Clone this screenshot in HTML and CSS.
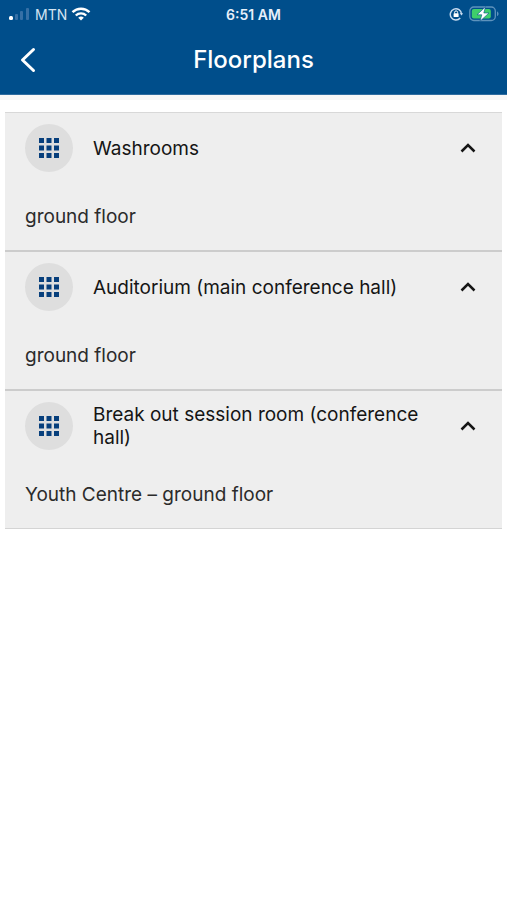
FILE: index.html
```html
<!DOCTYPE html>
<html lang="en">
<head>
<meta charset="utf-8">
<meta name="viewport" content="width=device-width, initial-scale=1">
<title>Floorplans</title>
<link rel="stylesheet" href="styles.css">
</head>
<body>
<svg class="sprite" aria-hidden="true">
  <symbol id="grid" viewBox="0 0 20 20">
    <path d="M0 0h5v5H0zM7.500 0h5v5h-5zM15 0h5v5h-5zM0 7.500h5v5H0zM7.500 7.500h5v5h-5zM15 7.500h5v5h-5zM0 15h5v5H0zM7.500 15h5v5h-5zM15 15h5v5h-5z"/>
  </symbol>
  <symbol id="up" viewBox="0 0 16 10">
    <path d="M1.500 8.500 8 2l6.500 6.500" fill="none" stroke="currentColor" stroke-width="2.500"/>
  </symbol>
</svg>
<header class="top">
  <div class="status">
    <div class="status-side">
      <svg class="signal" width="23" height="14" viewBox="0 0 23 14" aria-hidden="true">
        <rect x="1" y="9" width="4" height="4" rx="1.500" fill="#fff"/>
        <g fill="#5a88b8" opacity=".6"><rect x="7" y="7" width="3" height="6" rx="1"/><rect x="12" y="4" width="3" height="9" rx="1"/><rect x="18" y="1" width="3" height="12" rx="1"/></g>
      </svg>
      <span class="carrier">MTN</span>
      <svg width="20" height="14" viewBox="0 0 20 14" fill="none" stroke="#fff" stroke-width="2.400" aria-hidden="true">
        <path d="M1.500 5.200a12.200 12.200 0 0 1 17 0M4.800 8.500a7.500 7.500 0 0 1 10.400 0"/>
        <path d="M10 13.500 7.200 10.800a4 4 0 0 1 5.600 0z" fill="#fff" stroke="none"/>
      </svg>
    </div>
    <span class="time">6:51 AM</span>
    <div class="status-side status-end">
      <svg width="14" height="14" viewBox="0 0 14 14" aria-hidden="true">
        <path d="M11.200 11A5.600 5.600 0 1 1 12.500 7" fill="none" stroke="#c9dcf0" stroke-width="1.500"/>
        <path d="m10.700 6.300 1.900 2.200 1.400-2.200z" fill="#c9dcf0"/>
        <rect x="4.600" y="6.300" width="5" height="3.700" rx=".6" fill="#fff"/>
        <path d="M5.600 6.500V5.400a1.500 1.500 0 0 1 3 0v1.100" fill="none" stroke="#fff"/>
      </svg>
      <svg width="30" height="16" viewBox="0 0 30 16" aria-hidden="true">
        <rect x=".8" y="1" width="25.500" height="13.500" rx="4" fill="none" stroke="#5e93bd" stroke-width="1.300"/>
        <path d="M28 5.500c2 .6 2 4 0 4.600z" fill="#5e93bd"/>
        <rect x="2.800" y="3" width="19" height="9.500" rx="2" fill="#3fcf6b"/>
        <path d="M16.500 .8 8 8.800h4.800L11 15.200 20 7h-5.200z" fill="#fff" stroke="#00508c" stroke-width=".6"/>
      </svg>
    </div>
  </div>
  <div class="bar">
    <button class="back" type="button" aria-label="Back">
      <svg width="16" height="26" viewBox="0 0 16 26" fill="none" stroke="currentColor" stroke-width="3" stroke-linecap="round" stroke-linejoin="round" aria-hidden="true"><path d="M13.500 2.500 2.500 13l11 10.500"/></svg>
    </button>
    <h1 class="title">Floorplans</h1>
  </div>
</header>
<main class="list">
  <section class="item">
    <button class="head" type="button" aria-expanded="true">
      <span class="badge"><svg width="20" height="20" aria-hidden="true"><use href="#grid"/></svg></span>
      <span class="name">Washrooms</span>
      <svg width="16" height="10" aria-hidden="true"><use href="#up"/></svg>
    </button>
    <p class="place">ground floor</p>
  </section>
  <section class="item">
    <button class="head" type="button" aria-expanded="true">
      <span class="badge"><svg width="20" height="20" aria-hidden="true"><use href="#grid"/></svg></span>
      <span class="name">Auditorium (main conference hall)</span>
      <svg width="16" height="10" aria-hidden="true"><use href="#up"/></svg>
    </button>
    <p class="place">ground floor</p>
  </section>
  <section class="item">
    <button class="head" type="button" aria-expanded="true">
      <span class="badge"><svg width="20" height="20" aria-hidden="true"><use href="#grid"/></svg></span>
      <span class="name">Break out session room (conference hall)</span>
      <svg width="16" height="10" aria-hidden="true"><use href="#up"/></svg>
    </button>
    <p class="place">Youth Centre – ground floor</p>
  </section>
</main>
</body>
</html>
```
FILE: styles.css
```css
* { box-sizing: border-box; }

body {
  margin: 0;
  background: #fff;
  color: #1c1c1c;
  font-family: Inter, "Liberation Sans", sans-serif;
}

button {
  border: 0;
  padding: 0;
  background: none;
  color: inherit;
  font: inherit;
}

svg { flex: none; }

.sprite { display: none; }

.top {
  background: #004e8b;
  color: #fff;
  border-bottom: 1px solid #2f6c9f;
  box-shadow: 0 5px 0 #f7f7f7;
}

.status {
  display: grid;
  grid-template-columns: 1fr auto 1fr;
  align-items: center;
  height: 28px;
  padding: 0 8px;
  font-size: 14px;
}

.status-side {
  display: flex;
  align-items: center;
  gap: 4px;
}

.status-end {
  justify-content: flex-end;
  gap: 6px;
}

.carrier { color: #d5e4f2; }

.time {
  color: #e6effa;
  font-weight: 600;
}

.bar {
  display: grid;
  grid-template-columns: 48px 1fr 48px;
  align-items: center;
  height: 66px;
  padding-bottom: 2px;
}

.back {
  display: flex;
  justify-content: flex-end;
  padding: 8px 12px;
}

.title {
  margin: 0;
  font-size: 24px;
  font-weight: 500;
  line-height: 32px;
  text-align: center;
}

.list {
  margin: 17px 5px 0;
  border-top: 1px solid #d8d8d8;
}

.item {
  background: #eee;
  border-bottom: 2px solid #ccc;
}

.item:last-child { border-bottom: 1px solid #d4d4d4; }

.head {
  display: flex;
  align-items: center;
  gap: 20px;
  width: 100%;
  min-height: 70px;
  padding: 0 26px 0 20px;
  text-align: left;
  color: #151515;
}

.badge {
  display: flex;
  flex: none;
  align-items: center;
  justify-content: center;
  width: 48px;
  height: 48px;
  border-radius: 50%;
  background: #dedede;
  color: #073f7c;
  fill: currentColor;
}

.name {
  flex: 1;
  font-size: 19px;
  line-height: 23px;
}

.place {
  margin: 0;
  padding: 20px 20px 19px;
  font-size: 19px;
  line-height: 28px;
  color: #2b2b2b;
}
```
